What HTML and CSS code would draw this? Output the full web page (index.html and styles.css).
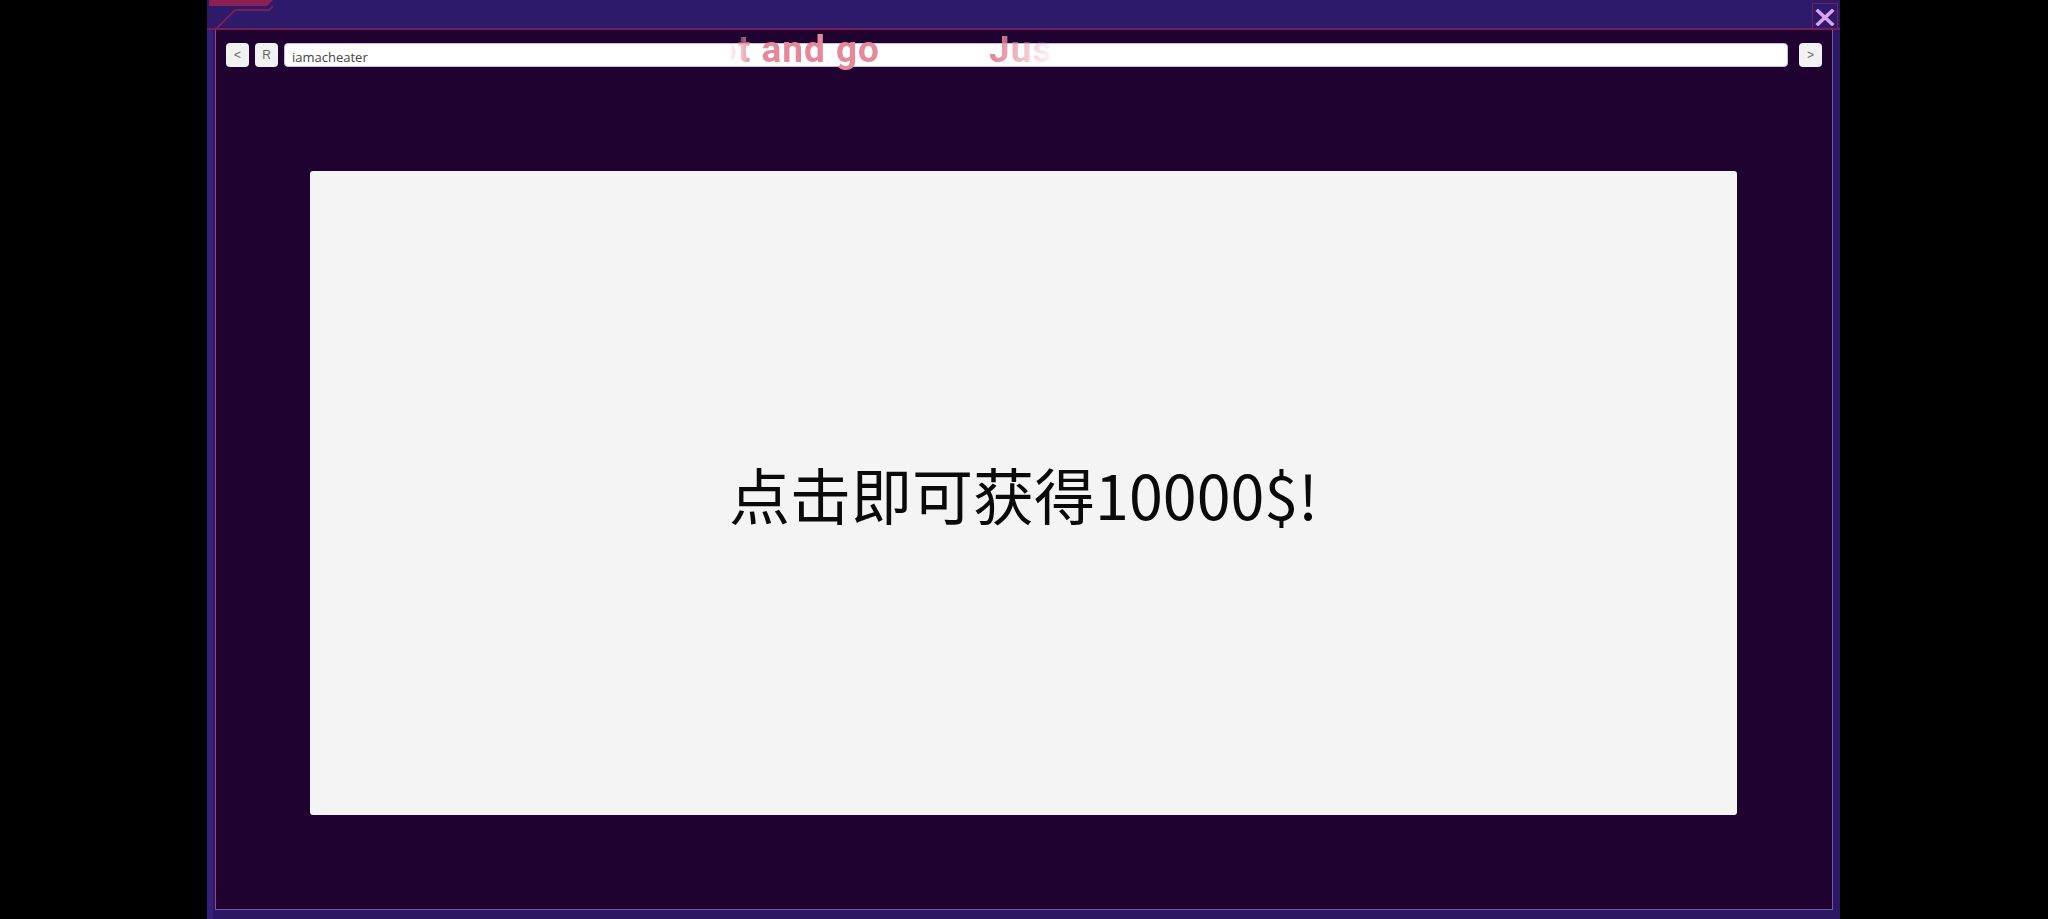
FILE: index.html
```html
<!DOCTYPE html>
<html lang="zh">
<head>
<meta charset="utf-8">
<title>iamacheater</title>
<link rel="stylesheet" href="styles.css">
</head>
<body>
<div class="window">
  <svg class="corner" width="80" height="32" viewBox="0 0 80 32">
    <polygon points="2,0 66,0 60,6 2,6" fill="#8a2152"/>
    <polyline points="8,30 28,10 62,10 66,6" fill="none" stroke="#7d1d55" stroke-width="2"/>
  </svg>
  <div class="titlebar">
    <div class="close">
      <svg width="20" height="17" viewBox="0 0 20 17">
        <path d="M3 2 L17 15 M17 2 L3 15" stroke="#d9a3f0" stroke-width="3.6" stroke-linecap="square"/>
      </svg>
    </div>
  </div>
  <div class="body">
    <div class="toolbar">
      <button class="btn">&lt;</button>
      <button class="btn">R</button>
      <div class="address">iamacheater</div>
      <button class="btn btn-go">&gt;</button>
    </div>
    <div class="panel">
      <div class="headline">点击即可获得10000$!</div>
    </div>
  </div>
  <div class="marquee">
    <div class="mq-first"><span>Just shoot and go</span></div>
    <span class="mq-second">Just shoot and go</span>
  </div>
</div>
</body>
</html>
```
FILE: styles.css
```css
html, body {
  margin: 0;
  padding: 0;
  background: #000;
  width: 2048px;
  height: 919px;
  overflow: hidden;
}

.window {
  position: relative;
  margin-left: 207px;
  width: 1633px;
  height: 919px;
  background: #2b1764;
  box-shadow: inset 6px 0 0 #35207a;
  display: flex;
  flex-direction: column;
  box-sizing: border-box;
}

.corner {
  position: absolute;
  left: 0;
  top: 0;
}

.titlebar {
  height: 28px;
  background: #2e1a6a;
  border-top: 1px solid #4a3590;
  border-bottom: 2px solid #7a1d56;
  box-sizing: content-box;
  margin-top: -1px;
  display: flex;
  justify-content: flex-end;
  align-items: stretch;
  padding-right: 2px;
}

.close {
  width: 24px;
  margin-top: 3px;
  border: 1px solid #7a1d56;
  border-bottom: none;
  display: flex;
  align-items: center;
  justify-content: center;
  padding-top: 3px;
}

.close svg {
  display: block;
}

.body {
  flex: 1;
  margin: 0 7px 9px 8px;
  background: #1f022f;
  border-left: 1px solid #a0457c;
  border-right: 1px solid #6b5aa8;
  border-bottom: 1px solid #6b5aa8;
  padding: 13px 10px 0 10px;
  display: flex;
  flex-direction: column;
}

.toolbar {
  display: flex;
  align-items: center;
  gap: 6px;
  height: 24px;
}

.btn {
  width: 23px;
  height: 24px;
  padding: 0;
  border: none;
  border-radius: 4px;
  background: #f1f1f1;
  color: #666;
  font-family: "Liberation Sans", Arial, sans-serif;
  font-size: 12px;
  line-height: 24px;
  text-align: center;
}

.btn-go {
  margin-left: 5px;
}

.address {
  flex: 1;
  height: 24px;
  box-sizing: border-box;
  background: #fff;
  border: 1px solid #c9bedc;
  border-radius: 4px;
  padding: 3px 0 0 7px;
  font-family: "Open Sans", "Noto Sans", sans-serif;
  font-size: 13px;
  line-height: 20px;
  color: #444;
}

.panel {
  flex: 1;
  margin: 104px 85px 94px 84px;
  background: #f4f4f4;
  border-radius: 3px;
  display: flex;
  align-items: center;
  justify-content: center;
}

.headline {
  font-family: "Noto Sans CJK SC", "Noto Sans", sans-serif;
  font-size: 61px;
  color: #0a0a0a;
}

.marquee {
  position: absolute;
  left: 515px;
  top: 28px;
  width: 340px;
  height: 46px;
  overflow: hidden;
  display: flex;
  -webkit-mask-image: linear-gradient(to right, transparent 0, transparent 2%, #000 9%, #000 80%, transparent 98%);
  mask-image: linear-gradient(to right, transparent 0, transparent 2%, #000 9%, #000 80%, transparent 98%);
  font-family: Roboto, "Liberation Sans", sans-serif;
  font-weight: bold;
  font-size: 37px;
  letter-spacing: 1px;
  color: #e5899a;
  white-space: nowrap;
}

.mq-first {
  width: 158px;
  flex-shrink: 0;
  display: flex;
  justify-content: flex-end;
}

.mq-second {
  margin-left: 109px;
  flex-shrink: 0;
}
```
